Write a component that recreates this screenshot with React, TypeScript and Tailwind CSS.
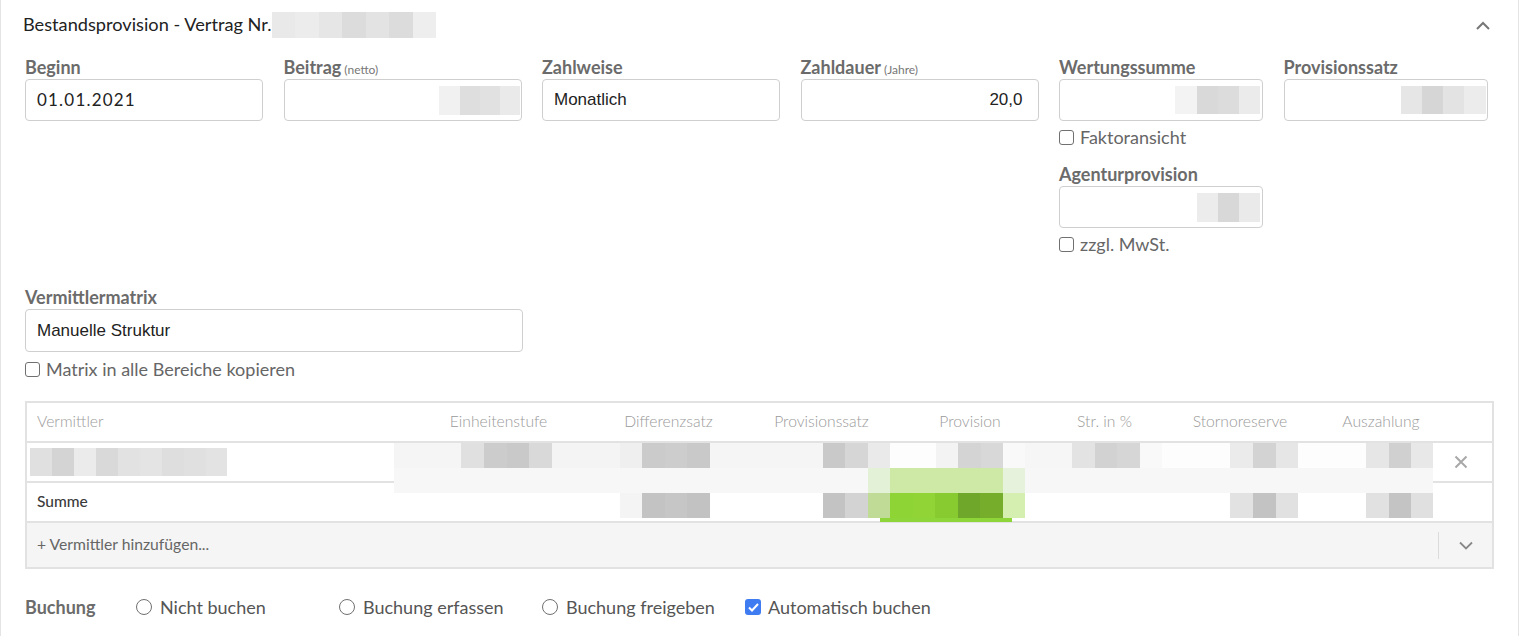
import React from 'react';

type Cell = [number, string];

// redacted (pixelated) values
const Mosaic = ({ cells, h }: { cells: Cell[]; h: number }) => (
    <div className="flex shrink-0">
        {cells.map(([w, c], i) => (
            <div key={i} style={{ width: w, height: h, background: c }} />
        ))}
    </div>
);

const TITLE_MOSAIC: Cell[] = [[23, '#e9e9e9'], [24, '#ececec'], [23, '#e6e6e6'], [24, '#dcdcdc'], [23, '#e3e3e3'], [24, '#dcdcdc'], [23, '#eeeeee']];
const BEITRAG_MOSAIC: Cell[] = [[21, '#f1f1f1'], [20, '#dedede'], [20, '#e1e1e1'], [20, '#eaeaea']];
const WERTUNG_MOSAIC: Cell[] = [[22, '#f3f3f3'], [21, '#d9d9d9'], [21, '#dcdcdc'], [21, '#ebebeb']];
const PROVSATZ_MOSAIC: Cell[] = [[21, '#e6e6e6'], [21, '#d6d6d6'], [21, '#e3e3e3'], [22, '#ececec']];
const AGENTUR_MOSAIC: Cell[] = [[21, '#ececec'], [21, '#d8d8d8'], [21, '#eaeaea']];
const NAME_MOSAIC: Cell[] = [[22, '#e0e0e0'], [22, '#d4d4d4'], [22, '#ebebeb'], [22, '#d9d9d9'], [22, '#e2e2e2'], [22, '#e4e4e4'], [22, '#dedede'], [22, '#e0e0e0'], [21, '#e3e3e3']];

const BAND_A: Cell[] = [
    [67, '#f5f5f5'], [23, '#e0e0e0'], [23, '#cccccc'], [22, '#c9c9c9'], [23, '#d9d9d9'],
    [68, '#f4f4f4'], [22, '#efefef'], [23, '#cbcbcb'], [22, '#cdcdcd'], [23, '#c9c9c9'],
    [113, '#f5f5f5'], [22, '#c9c9c9'], [23, '#d6d6d6'], [22, '#eaeaea'],
    [46, '#fdfdfd'], [22, '#f3f3f3'], [23, '#d4d4d4'], [22, '#d8d8d8'], [22, '#f9f9f9'],
    [47, '#f6f6f6'], [23, '#e3e3e3'], [22, '#d2d2d2'], [23, '#d6d6d6'], [22, '#f9f9f9'],
    [68, '#fdfdfd'], [23, '#ebebeb'], [23, '#d3d3d3'], [22, '#e6e6e6'],
    [68, '#fdfdfd'], [23, '#e6e6e6'], [22, '#d0d0d0'], [22, '#e8e8e8'],
];
const BAND_B: Cell[] = [[474, '#f7f7f7'], [22, '#e3f1d6'], [113, '#cde9a5'], [22, '#e6f2db'], [408, '#f7f7f7']];
const BAND_C: Cell[] = [
    [226, 'transparent'], [22, '#f4f4f4'], [23, '#c3c3c3'], [22, '#c6c6c6'], [23, '#c2c2c2'],
    [113, 'transparent'], [22, '#c3c3c3'], [23, '#d3d3d3'], [22, '#bfdb95'],
    [23, '#8fd435'], [22, '#90d435'], [23, '#87cb31'], [22, '#6ea72a'], [23, '#76ae2c'], [22, '#d5efb0'],
    [205, 'transparent'], [23, '#e2e2e2'], [23, '#c3c3c3'], [22, '#e1e1e1'],
    [68, 'transparent'], [23, '#e1e1e1'], [22, '#c4c4c4'], [22, '#e0e0e0'],
];

const Label = ({ children, hint }: { children: React.ReactNode; hint?: string }) => (
    <div className="h-[23px] leading-[22px] text-[18px] font-bold text-[#6b6b6b] whitespace-nowrap">
        {children}
        {hint && <span className="ml-[3px] text-[12px] font-normal text-[#777]">{hint}</span>}
    </div>
);

const Box = ({ children, className = '' }: { children?: React.ReactNode; className?: string }) => (
    <div className={`h-[42px] border border-[#cfcfcf] rounded-[4px] bg-white flex items-center ${className}`}>
        {children}
    </div>
);

const Check = ({ label, className = '' }: { label: string; className?: string }) => (
    <label className={`flex items-center gap-[6px] h-[24px] text-[18px] text-[#666] ${className}`}>
        <span className="w-[15px] h-[15px] border-[1.5px] border-[#707070] rounded-[3px] bg-white" />
        {label}
    </label>
);

const Radio = ({ label }: { label: string }) => (
    <label className="w-[203px] flex items-center gap-[8px] text-[18px] text-[#555]">
        <span className="w-[16px] h-[16px] rounded-full border-[1.5px] border-[#707070] bg-white" />
        {label}
    </label>
);

const HEADERS = ['Einheitenstufe', 'Differenzsatz', 'Provisionssatz', 'Provision', 'Str. in %', 'Stornoreserve', 'Auszahlung'];

const App = () => {
    return (
        <div className="w-[1519px] h-[636px] bg-white border-l border-r border-[#e4e4e4] font-['Lato',sans-serif] overflow-hidden">
            <div className="px-[24px]">
                <div className="h-[50px] flex items-center justify-between">
                    <div className="flex items-center -ml-[2px]">
                        <span className="text-[18.2px] text-[#222]">Bestandsprovision - Vertrag Nr.</span>
                        <Mosaic cells={TITLE_MOSAIC} h={26} />
                    </div>
                    <svg width="14" height="10" viewBox="0 0 14 10" className="mr-[4px] mt-[2px]">
                        <polyline points="1,8 7,2 13,8" fill="none" stroke="#777" strokeWidth="2" />
                    </svg>
                </div>

                <div className="flex gap-x-[20.5px] mt-[6px]">
                    <div className="w-[238px]">
                        <Label>Beginn</Label>
                        <Box className="px-[11px]">
                            <span className="text-[17px] tracking-[1.2px] text-[#222]">01.01.2021</span>
                        </Box>
                    </div>
                    <div className="w-[238px]">
                        <Label hint="(netto)">Beitrag</Label>
                        <Box className="justify-end pr-px">
                            <Mosaic cells={BEITRAG_MOSAIC} h={29} />
                        </Box>
                    </div>
                    <div className="w-[238px]">
                        <Label>Zahlweise</Label>
                        <Box className="px-[11px]">
                            <span className="text-[17px] text-[#222] font-['Liberation_Sans',Arial,sans-serif]">Monatlich</span>
                        </Box>
                    </div>
                    <div className="w-[238px]">
                        <Label hint="(Jahre)">Zahldauer</Label>
                        <Box className="justify-end px-[15px]">
                            <span className="text-[17px] text-[#222] font-['Liberation_Sans',Arial,sans-serif]">20,0</span>
                        </Box>
                    </div>
                    <div className="w-[204px]">
                        <Label>Wertungssumme</Label>
                        <Box className="justify-end pr-[2px]">
                            <Mosaic cells={WERTUNG_MOSAIC} h={28} />
                        </Box>
                        <Check label="Faktoransicht" className="mt-[4px]" />
                        <div className="mt-[14px]">
                            <Label>Agenturprovision</Label>
                        </div>
                        <Box className="justify-end pr-[2px]">
                            <Mosaic cells={AGENTUR_MOSAIC} h={29} />
                        </Box>
                        <Check label="zzgl. MwSt." className="mt-[4px]" />
                    </div>
                    <div className="w-[204px]">
                        <Label>Provisionssatz</Label>
                        <Box className="justify-end pr-px">
                            <Mosaic cells={PROVSATZ_MOSAIC} h={28} />
                        </Box>
                    </div>
                </div>

                <div className="mt-[30px] w-[498px]">
                    <Label>Vermittlermatrix</Label>
                    <Box className="h-[43px] px-[11px]">
                        <span className="text-[17px] text-[#222] font-['Liberation_Sans',Arial,sans-serif]">Manuelle Struktur</span>
                    </Box>
                    <Check label="Matrix in alle Bereiche kopieren" className="mt-[5px]" />
                </div>

                <div className="relative mt-[20px] border-2 border-[#e2e2e2]">
                    <div className="h-[40px] border-b-2 border-[#e2e2e2] grid grid-cols-[393px_157px_183px_123px_174px_95px_176px_106px_59px] items-center text-[15.7px] font-light text-[#9a9a9a]">
                        <span className="pl-[10px]">Vermittler</span>
                        {HEADERS.map(h => <span key={h} className="text-center">{h}</span>)}
                        <span />
                    </div>
                    <div className="h-[40px] border-b-2 border-[#e2e2e2] flex items-center justify-between">
                        <div className="ml-[3px]">
                            <Mosaic cells={NAME_MOSAIC} h={28} />
                        </div>
                        <svg width="14" height="14" viewBox="0 0 14 14" className="mr-[24px]">
                            <path d="M1.5 1.5 L12.5 12.5 M12.5 1.5 L1.5 12.5" stroke="#a8a8a8" strokeWidth="2" />
                        </svg>
                    </div>
                    <div className="h-[40px] border-b-2 border-[#e2e2e2] flex items-center pl-[10px] text-[15.5px] font-medium text-[#3a3a3a]">
                        Summe
                    </div>
                    <div className="h-[44px] bg-[#f5f5f5] flex items-center pl-[10px] text-[15.7px] text-[#666]">
                        <span className="flex-1">+ Vermittler hinzufügen...</span>
                        <span className="w-px h-[27px] bg-[#dcdcdc]" />
                        <span className="w-[53px] flex justify-center">
                            <svg width="14" height="9" viewBox="0 0 14 9">
                                <polyline points="1,1.5 7,7.5 13,1.5" fill="none" stroke="#888" strokeWidth="1.8" />
                            </svg>
                        </span>
                    </div>

                    <div className="absolute left-[367px] top-[40px] pointer-events-none">
                        <Mosaic cells={BAND_A} h={25} />
                        <Mosaic cells={BAND_B} h={25} />
                        <Mosaic cells={BAND_C} h={25} />
                        <div className="ml-[486px] w-[132px] h-[4px] bg-[#8ed53a]" />
                    </div>
                </div>

                <div className="mt-[26px] h-[24px] flex items-center">
                    <span className="w-[111px] text-[18px] font-bold text-[#6b6b6b]">Buchung</span>
                    <Radio label="Nicht buchen" />
                    <Radio label="Buchung erfassen" />
                    <Radio label="Buchung freigeben" />
                    <label className="flex items-center gap-[7px] text-[18px] text-[#555]">
                        <span className="w-[16px] h-[16px] rounded-[3px] bg-[#3f7cf2] flex items-center justify-center">
                            <svg width="11" height="9" viewBox="0 0 11 9">
                                <polyline points="1,4.5 4,7.5 10,1" fill="none" stroke="#fff" strokeWidth="2" />
                            </svg>
                        </span>
                        Automatisch buchen
                    </label>
                </div>
            </div>
        </div>
    );
};

export default App;
